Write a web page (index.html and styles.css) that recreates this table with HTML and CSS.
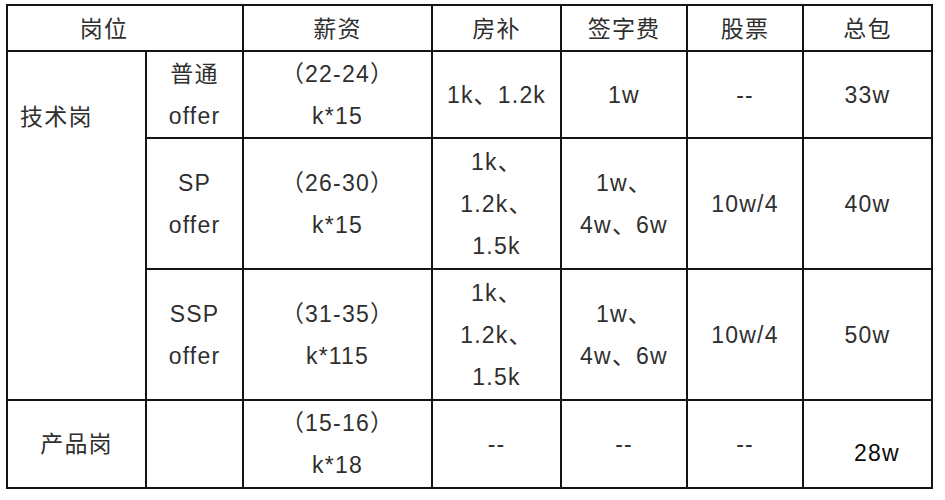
FILE: index.html
```html
<!DOCTYPE html>
<html lang="zh-CN">
<head>
<meta charset="utf-8">
<title>岗位薪资</title>
<link rel="stylesheet" href="styles.css">
</head>
<body>
<table class="grid">
  <colgroup>
    <col class="c1"><col class="c2"><col class="c3"><col class="c4"><col class="c5"><col class="c6"><col class="c7">
  </colgroup>
  <tr class="row-h">
    <th colspan="2" class="pos">岗位</th>
    <th>薪资</th>
    <th>房补</th>
    <th>签字费</th>
    <th>股票</th>
    <th>总包</th>
  </tr>
  <tr class="row-1">
    <td rowspan="3" class="tech">技术岗</td>
    <td>普通<br>offer</td>
    <td>（22-24）<br>k*15</td>
    <td>1k、1.2k</td>
    <td>1w</td>
    <td>--</td>
    <td>33w</td>
  </tr>
  <tr class="row-2">
    <td>SP<br>offer</td>
    <td>（26-30）<br>k*15</td>
    <td>1k、<br>1.2k、<br>1.5k</td>
    <td>1w、<br>4w、6w</td>
    <td>10w/4</td>
    <td>40w</td>
  </tr>
  <tr class="row-3">
    <td>SSP<br>offer</td>
    <td>（31-35）<br>k*115</td>
    <td>1k、<br>1.2k、<br>1.5k</td>
    <td>1w、<br>4w、6w</td>
    <td>10w/4</td>
    <td>50w</td>
  </tr>
  <tr class="row-4">
    <td>产品岗</td>
    <td></td>
    <td>（15-16）<br>k*18</td>
    <td>--</td>
    <td>--</td>
    <td>--</td>
    <td class="total-dark">28w</td>
  </tr>
</table>
</body>
</html>
```
FILE: styles.css
```css
html, body {
  margin: 0;
  padding: 0;
  background: #ffffff;
}

body {
  padding: 4px 0 0 6px;
  font-family: "Liberation Sans", "Noto Sans CJK SC", sans-serif;
  font-size: 23px;
  color: #2f2f2f;
  letter-spacing: 1.2px;
}

.grid {
  table-layout: fixed;
  width: 927px;
  border-collapse: separate;
  border-spacing: 0;
  border-left: 2px solid #141414;
  border-top: 2px solid #141414;
}

.c1 { width: 139px; }
.c2 { width: 97px; }
.c3 { width: 189px; }
.c4 { width: 129px; }
.c5 { width: 126px; }
.c6 { width: 116px; }
.c7 { width: 129px; }

.grid th,
.grid td {
  box-sizing: border-box;
  padding: 0;
  border-right: 2px solid #141414;
  border-bottom: 2px solid #141414;
  text-align: center;
  vertical-align: middle;
  font-weight: normal;
  line-height: 42px;
  white-space: nowrap;
}

.row-h { height: 46px; }
.row-1 { height: 87px; }
.row-2 { height: 131px; }
.row-3 { height: 131px; }
.row-4 { height: 88px; }

.grid th {
  line-height: 42px;
  padding-top: 2px;
}

.grid .pos {
  padding-right: 42px;
}

.grid .tech {
  text-align: left;
  vertical-align: top;
  padding-top: 44px;
  padding-left: 12px;
}

.grid .total-dark {
  color: #0a0a0a;
  padding-left: 19px;
  padding-top: 18px;
}
```
